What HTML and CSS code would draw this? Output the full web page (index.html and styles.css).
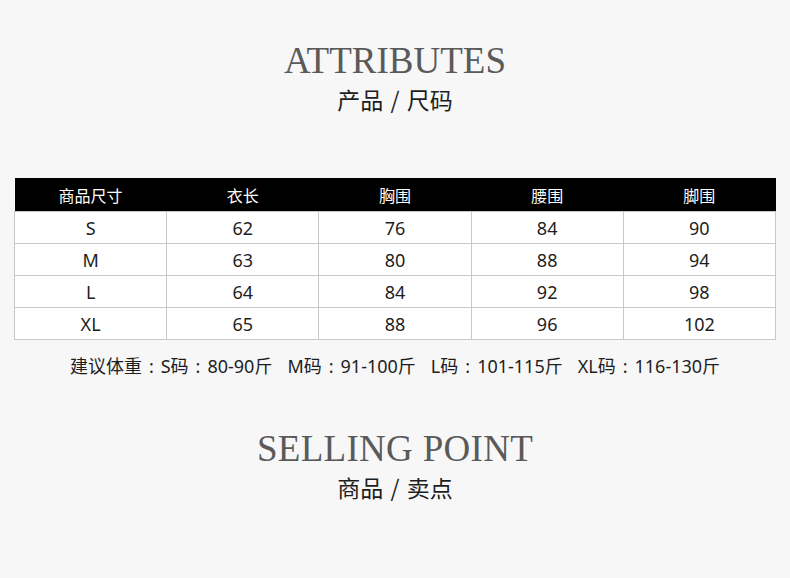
FILE: index.html
```html
<!DOCTYPE html>
<html lang="zh-CN">
<head>
<meta charset="utf-8">
<title>Attributes</title>
<link rel="stylesheet" href="styles.css">
</head>
<body>
<main class="page">
  <section class="block">
    <h1 class="title">ATTRIBUTES</h1>
    <p class="sub">产品 / 尺码</p>
  </section>
  <table class="sizes">
    <thead>
      <tr><th>商品尺寸</th><th>衣长</th><th>胸围</th><th>腰围</th><th>脚围</th></tr>
    </thead>
    <tbody>
      <tr><td>S</td><td>62</td><td>76</td><td>84</td><td>90</td></tr>
      <tr><td>M</td><td>63</td><td>80</td><td>88</td><td>94</td></tr>
      <tr><td>L</td><td>64</td><td>84</td><td>92</td><td>98</td></tr>
      <tr><td>XL</td><td>65</td><td>88</td><td>96</td><td>102</td></tr>
    </tbody>
  </table>
  <p class="note">建议体重<span class="colon">:</span>S码<span class="colon">:</span>80-90斤<span class="gap"></span>M码<span class="colon">:</span>91-100斤<span class="gap"></span>L码<span class="colon">:</span>101-115斤<span class="gap"></span>XL码<span class="colon">:</span>116-130斤</p>
  <section class="block block2">
    <h2 class="title">SELLING POINT</h2>
    <p class="sub">商品 / 卖点</p>
  </section>
</main>
</body>
</html>
```
FILE: styles.css
```css
html, body {
  margin: 0;
  padding: 0;
  background: #f7f7f7;
}
.page {
  width: 790px;
  height: 578px;
  overflow: hidden;
  display: flex;
  flex-direction: column;
  align-items: center;
  font-family: "Noto Sans", "Noto Sans CJK SC", sans-serif;
  color: #1e1e1e;
}
.block {
  padding-top: 43px;
  display: flex;
  flex-direction: column;
  align-items: center;
}
.block2 {
  padding-top: 52px;
}
.title {
  margin: 0;
  font-family: "Liberation Serif", serif;
  font-weight: normal;
  font-size: 37px;
  line-height: 36px;
  color: #5a5a5a;
}
.block2 .title {
  letter-spacing: 0.3px;
}
.sub {
  margin: 9px 0 0;
  font-family: "Noto Sans CJK SC", sans-serif;
  font-size: 23px;
  line-height: 23px;
  word-spacing: 2px;
  color: #1e1e1e;
}
.sizes {
  margin-top: 67px;
  width: 762px;
  table-layout: fixed;
  border-collapse: collapse;
  background: #fff;
}
.sizes th {
  background: #000;
  color: #fff;
  font-family: "Noto Sans CJK SC", sans-serif;
  font-weight: normal;
  font-size: 16px;
  height: 33px;
  padding: 0;
  border: none;
}
.sizes td {
  border: 1px solid #c8c8c8;
  height: 31px;
  padding: 0;
  text-align: center;
  font-size: 18px;
  color: #1e1e1e;
}
.note {
  margin: 13px 0 0;
  font-family: "Noto Sans", "Noto Sans CJK SC", sans-serif;
  font-size: 18px;
  line-height: 26px;
  color: #1e1e1e;
}
.colon {
  display: inline-block;
  padding: 0 7px;
}
.gap {
  display: inline-block;
  width: 15px;
}
```
